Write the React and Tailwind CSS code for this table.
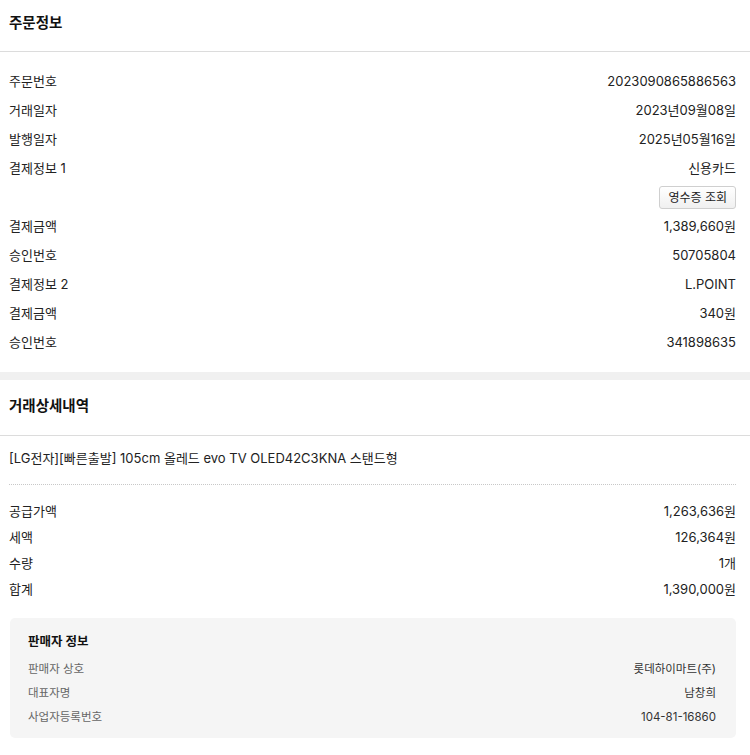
import React from "react";

const font = { fontFamily: 'Inter, "Noto Sans CJK KR", "Noto Sans", sans-serif' };

function Row({ label, value, h = "h-[29px]" }) {
  return (
    <div className={`flex ${h} items-center justify-between text-[13px] text-[#222]`}>
      <span>{label}</span>
      <span>{value}</span>
    </div>
  );
}

function SellerRow({ label, value }) {
  return (
    <div className="flex h-[24px] items-center justify-between text-[11.5px]">
      <span className="text-[#666]">{label}</span>
      <span className="text-[#333]">{value}</span>
    </div>
  );
}

export default function App() {
  return (
    <div className="w-[750px] bg-white" style={font}>
      {/* 주문정보 */}
      <div className="flex h-[52px] items-start border-b border-[#dcdcdc] pl-[9px] pr-[14px] pt-[12px]">
        <h2 className="text-[14.5px] font-bold text-[#111]">주문정보</h2>
      </div>
      <div className="pl-[9px] pr-[14px] pt-[15px] pb-[15px]">
        <Row label="주문번호" value="2023090865886563" />
        <Row label="거래일자" value="2023년09월08일" />
        <Row label="발행일자" value="2025년05월16일" />
        <Row label="결제정보 1" value="신용카드" />
        <div className="flex h-[29px] items-center justify-end">
          <button className="h-[23px] rounded-[3px] border border-[#cfcfcf] bg-gradient-to-b from-white to-[#f0f0f0] px-[8px] text-[12px] text-[#222]">
            영수증 조회
          </button>
        </div>
        <Row label="결제금액" value="1,389,660원" />
        <Row label="승인번호" value="50705804" />
        <Row label="결제정보 2" value="L.POINT" />
        <Row label="결제금액" value="340원" />
        <Row label="승인번호" value="341898635" />
      </div>
      <div className="h-[8px] bg-[#f0f0f0]" />

      {/* 거래상세내역 */}
      <div className="flex h-[56px] items-center border-b border-[#dcdcdc] pl-[9px] pr-[14px] pb-[3px]">
        <h2 className="text-[14.5px] font-bold text-[#111]">거래상세내역</h2>
      </div>
      <div className="pl-[9px] pr-[14px]">
        <div className="flex h-[49px] items-center border-b border-dotted border-[#c8c8c8] pb-[2px] text-[13px] text-[#222]">
          [LG전자][빠른출발] 105cm 올레드 evo TV OLED42C3KNA 스탠드형
        </div>
        <div className="pt-[14px]">
          <Row h="h-[26px]" label="공급가액" value="1,263,636원" />
          <Row h="h-[26px]" label="세액" value="126,364원" />
          <Row h="h-[26px]" label="수량" value="1개" />
          <Row h="h-[26px]" label="합계" value="1,390,000원" />
        </div>
        <div className="ml-px mt-[15px] mb-[17px] rounded-[5px] bg-[#f5f5f5] pl-[18px] pr-[20px] pt-[14px] pb-[8px]">
          <div className="flex h-[20px] items-center text-[12.5px] font-bold text-[#111]">판매자 정보</div>
          <div className="mt-[6px]">
            <SellerRow label="판매자 상호" value="롯데하이마트(주)" />
            <SellerRow label="대표자명" value="남창희" />
            <SellerRow label="사업자등록번호" value="104-81-16860" />
          </div>
        </div>
      </div>
    </div>
  );
}
